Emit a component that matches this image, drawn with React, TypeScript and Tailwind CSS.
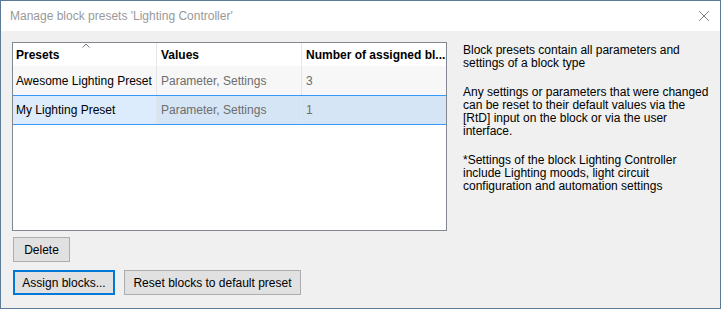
const font = { fontFamily: '"Liberation Sans", Arial, sans-serif' };

const rows = [
  { name: 'Awesome Lighting Preset', values: 'Parameter, Settings', count: '3', selected: false },
  { name: 'My Lighting Preset', values: 'Parameter, Settings', count: '1', selected: true },
];

export default function App() {
  return (
    <div
      className="w-[721px] h-[309px] border border-[#5b7a95] bg-[#f0f0f0] flex flex-col text-[12px] text-black"
      style={font}
    >
      {/* Title bar */}
      <div className="h-[30px] bg-white flex items-center justify-between pl-[9px] pr-[9px] shrink-0">
        <span className="text-[#999999] text-[12px]">Manage block presets 'Lighting Controller'</span>
        <svg width="12" height="12" viewBox="0 0 12 12" className="mr-[1px]">
          <path d="M1 1 L11 11 M11 1 L1 11" stroke="#8a8a8a" strokeWidth="1" />
        </svg>
      </div>

      <div className="flex pl-[11px] pt-[11px]">
        {/* Left side */}
        <div className="w-[435px] shrink-0">
          <div className="h-[189px] border border-[#828790] bg-white flex flex-col">
            {/* Header */}
            <div className="grid grid-cols-[144px_145px_1fr] h-[23px] shrink-0 font-bold">
              <div className="relative flex items-center pl-[3px] border-r border-[#e5e5e5]">
                Presets
                <svg width="8" height="5" viewBox="0 0 8 5" className="absolute left-[69px] top-0">
                  <path d="M0.5 4.5 L4 1 L7.5 4.5" stroke="#777" fill="none" strokeWidth="1" />
                </svg>
              </div>
              <div className="flex items-center pl-[4px] border-r border-[#e5e5e5]">Values</div>
              <div className="flex items-center pl-[4px] whitespace-nowrap overflow-hidden">Number of assigned bl...</div>
            </div>
            {rows.map((r) => (
              <div
                key={r.name}
                className={
                  r.selected
                    ? 'grid grid-cols-[144px_145px_1fr] h-[30px] border-y border-[#3399ff] bg-[#d5e5f5]'
                    : 'grid grid-cols-[144px_145px_1fr] h-[29px] bg-[#f7f7f7]'
                }
              >
                <div
                  className={`flex items-center pl-[3px] border-r border-[#e5e5e5] whitespace-nowrap ${r.selected ? 'bg-[#dcecfc]' : ''}`}
                >
                  {r.name}
                </div>
                <div className="flex items-center pl-[4px] border-r border-[#e5e5e5] text-[#6d6d6d] whitespace-nowrap">
                  {r.values}
                </div>
                <div className="flex items-center pl-[4px] text-[#6d6d6d]">{r.count}</div>
              </div>
            ))}
          </div>

          <button className="mt-[6px] ml-[1px] w-[57px] h-[25px] border border-[#adadad] bg-[#e1e1e1] text-[12px]">
            Delete
          </button>
          <div className="flex gap-[9px] mt-[8px] ml-[1px]">
            <button className="w-[102px] h-[25px] border-2 border-[#0078d7] bg-[#e1e1e1] text-[12px]">
              Assign blocks...
            </button>
            <button className="w-[177px] h-[25px] border border-[#adadad] bg-[#e1e1e1] text-[12px]">
              Reset blocks to default preset
            </button>
          </div>
        </div>

        {/* Right side help text */}
        <div className="ml-[16px] pt-[2px] text-[12px] leading-[13px] flex flex-col gap-[16px] whitespace-nowrap">
          <p>
            Block presets contain all parameters and
            <br />
            settings of a block type
          </p>
          <p>
            Any settings or parameters that were changed
            <br />
            can be reset to their default values via the
            <br />
            [RtD] input on the block or via the user
            <br />
            interface.
          </p>
          <p>
            *Settings of the block Lighting Controller
            <br />
            include Lighting moods, light circuit
            <br />
            configuration and automation settings
          </p>
        </div>
      </div>
    </div>
  );
}
